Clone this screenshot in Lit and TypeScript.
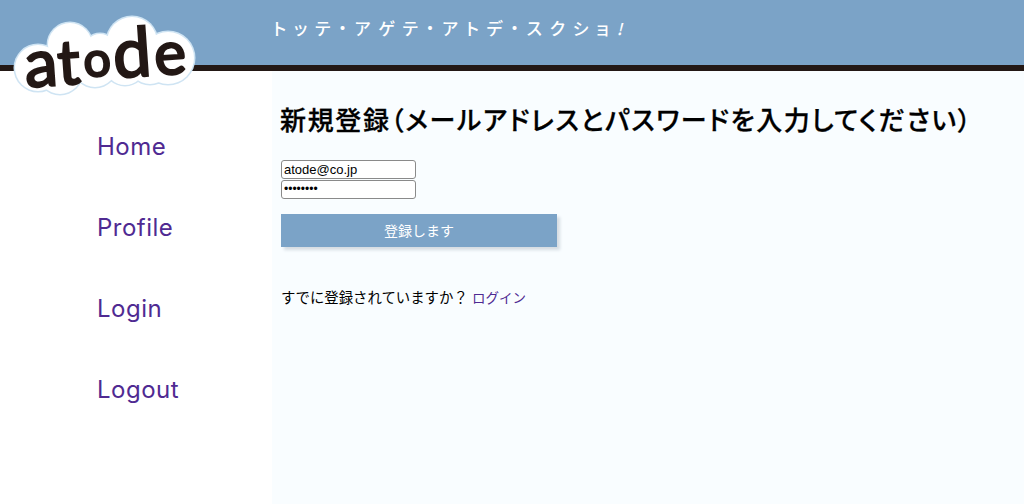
import { LitElement, html, svg, css } from "lit";
import { customElement } from "lit/decorators.js";

const NAV = ["Home", "Profile", "Login", "Logout"];

// puffy cloud behind the logo
const CLOUD = [
  [38, 68, 23], [70, 45, 22], [60, 72, 22], [95, 65, 22], [132, 42, 25],
  [125, 65, 20], [168, 58, 26], [100, 50, 16], [150, 62, 22],
];

@customElement("app-root")
export class AppRoot extends LitElement {
  static styles = css`
    :host {
      display: block;
      position: relative;
      width: 1024px;
      height: 504px;
      overflow: hidden;
      background: #fff;
      font-family: "Liberation Sans", "Noto Sans CJK JP", sans-serif;
      color: #000;
    }
    .header {
      height: 65px;
      background: #7ba3c7;
      border-bottom: 6px solid #231815;
      padding-left: 273px;
    }
    .tagline {
      display: block;
      padding-top: 18px;
      font: 500 17px/20px "Noto Sans CJK JP", sans-serif;
      font-feature-settings: "palt";
      letter-spacing: 7.8px;
      color: #fff;
      white-space: nowrap;
    }
    .tagline i {
      font-size: 16px;
    }
    .logo {
      position: absolute;
      left: 10px;
      top: 12px;
      overflow: visible;
    }
    .logo text {
      font-family: Lato, sans-serif;
      font-weight: 400;
      fill: #231815;
      stroke: #231815;
      stroke-width: 2.4px;
    }
    .body {
      display: flex;
      height: 433px;
    }
    .side {
      width: 272px;
      padding: 61px 0 0 97px;
      box-sizing: border-box;
      display: flex;
      flex-direction: column;
      gap: 51px;
    }
    .side a {
      font: 400 24px/30px Inter, sans-serif;
      letter-spacing: 0.5px;
      color: #4f2a92;
      text-decoration: none;
    }
    .main {
      flex: 1;
      background: #f9fdff;
      padding: 31px 0 0 8px;
    }
    h1 {
      margin: 0 0 24px;
      font: 500 26px/34px "Noto Sans CJK JP", sans-serif;
      font-feature-settings: "palt";
      letter-spacing: 1.65px;
      -webkit-text-stroke: 0.3px #000;
      white-space: nowrap;
    }
    .field {
      display: block;
      box-sizing: border-box;
      width: 135px;
      height: 19px;
      margin: 0 0 1px 1px;
      padding: 0 0 1px 2px;
      border: 1px solid #8a8a8a;
      border-radius: 3px;
      background: #fff;
      font: 13px "Liberation Sans", sans-serif;
      color: #000;
    }
    .pass {
      font-size: 12px;
    }
    .btn {
      display: block;
      width: 276px;
      height: 33px;
      margin: 15px 0 0 1px;
      padding: 0 0 2px;
      border: 0;
      background: #7ba3c7;
      box-shadow: 3px 3px 3px #d5dce2;
      color: #fff;
      font: 400 14px/20px "Noto Sans CJK JP", sans-serif;
    }
    .note {
      margin: 40px 0 0 1px;
      font: 400 14.4px/20px "Noto Sans CJK JP", sans-serif;
      white-space: nowrap;
    }
    .note a {
      color: #4f2a92;
      font-size: 13.5px;
      text-decoration: none;
      margin-left: 1px;
    }
  `;

  render() {
    return html`
      <div class="header">
        <span class="tagline">トッテ・アゲテ・アトデ・スクショ<i>!</i></span>
      </div>
      <svg class="logo" width="190" height="90" viewBox="10 12 190 90">
        ${CLOUD.map(
          ([x, y, r]) => svg`<circle cx=${x} cy=${y} r=${r + 1.5} fill="#cfe4f3"></circle>`
        )}
        ${CLOUD.map(([x, y, r]) => svg`<circle cx=${x} cy=${y} r=${r} fill="#fff"></circle>`)}
        <text transform="rotate(-4 100 70)">
          <tspan x="25" y="82" font-size="66">a</tspan>
          <tspan x="58" y="82" font-size="62">t</tspan>
          <tspan x="84" y="76" font-size="48">o</tspan>
          <tspan x="114" y="79" font-size="68">d</tspan>
          <tspan x="155" y="79" font-size="60">e</tspan>
        </text>
      </svg>
      <div class="body">
        <nav class="side">
          ${NAV.map((n) => html`<a href="#">${n}</a>`)}
        </nav>
        <main class="main">
          <h1>新規登録（メールアドレスとパスワードを入力してください）</h1>
          <input class="field" type="text" value="atode@co.jp" />
          <input class="field pass" type="password" value="password" />
          <button class="btn">登録します</button>
          <p class="note">すでに登録されていますか？ <a href="#">ログイン</a></p>
        </main>
      </div>
    `;
  }
}
